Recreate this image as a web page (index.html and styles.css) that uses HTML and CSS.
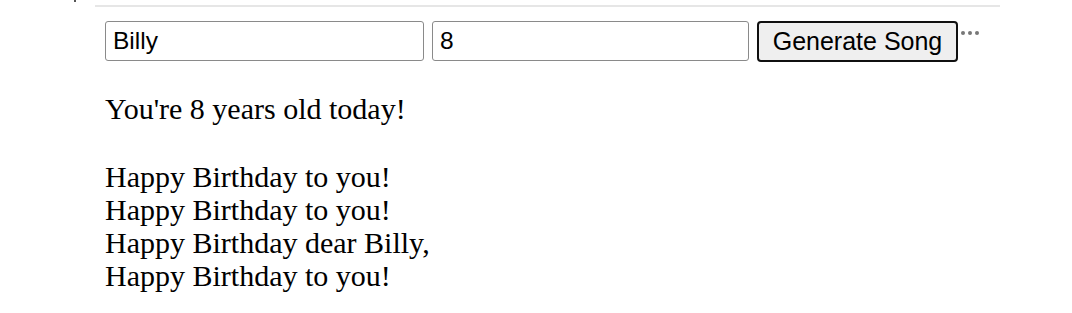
FILE: index.html
```html
<!DOCTYPE html>
<html>
<head>
<meta charset="utf-8">
<link rel="stylesheet" href="styles.css">
</head>
<body>
<span class="mark"></span>
<div class="app">
  <div class="form">
    <input class="field" type="text" value="Billy">
    <input class="field field-age" type="text" value="8">
    <button class="generate">Generate Song</button>
    <span class="more"><i></i><i></i><i></i></span>
  </div>
  <p class="message">You're 8 years old today!</p>
  <p class="song">Happy Birthday to you!<br>Happy Birthday to you!<br>Happy Birthday dear Billy,<br>Happy Birthday to you!</p>
</div>
</body>
</html>
```
FILE: styles.css
```css
html, body {
  margin: 0;
  padding: 0;
  background: #ffffff;
}
body {
  font-family: "Liberation Serif", "Times New Roman", serif;
  color: #000;
  position: relative;
  height: 313px;
  overflow: hidden;
}
.mark {
  position: absolute;
  left: 74px;
  top: 0;
  width: 2px;
  height: 2px;
  background: #555;
}
.app {
  margin: 5px 0 0 95px;
  width: 905px;
  border-top: 2px solid #e6e6e6;
  padding: 14px 10px 0;
  box-sizing: border-box;
}
.form {
  display: flex;
  align-items: flex-start;
  gap: 8px;
}
.field {
  width: 319px;
  height: 40px;
  box-sizing: border-box;
  border: 1px solid #8a8a8a;
  border-radius: 3px;
  padding: 0 7px;
  font-family: "Liberation Sans", Arial, sans-serif;
  font-size: 24.5px;
  color: #000;
  background: #fff;
  margin: 0;
}
.field-age {
  width: 317px;
}
.generate {
  width: 201px;
  height: 41px;
  box-sizing: border-box;
  margin: 0;
  padding: 0;
  border: 2px solid #101010;
  border-radius: 4px;
  background: #efefef;
  font-family: "Liberation Sans", Arial, sans-serif;
  font-size: 25px;
  color: #000;
}
.more {
  display: flex;
  gap: 3px;
  margin: 10px 0 0 -5px;
}
.more i {
  display: block;
  width: 4px;
  height: 4px;
  border-radius: 50%;
  background: #777;
}
.message {
  margin: 30px 0 0;
  font-size: 30px;
  line-height: 33px;
}
.song {
  margin: 35px 0 0;
  font-size: 30px;
  line-height: 33px;
}
```
